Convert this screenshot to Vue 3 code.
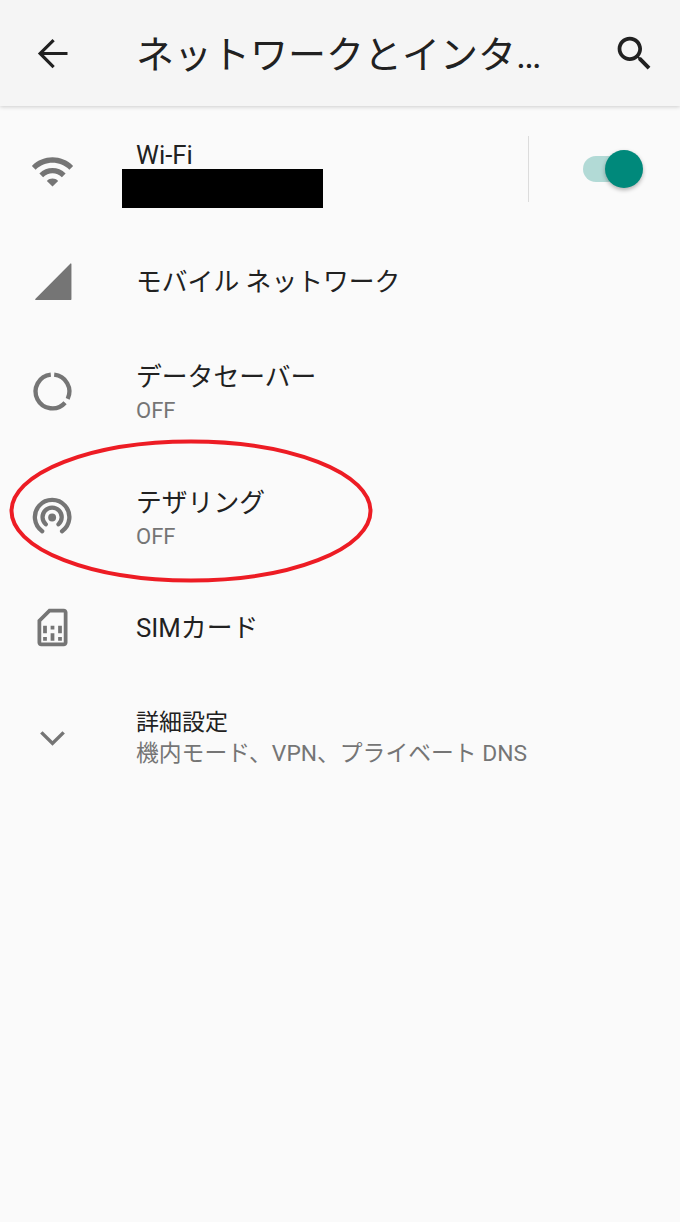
<script setup>
const rows = [
  { id: 'mobile', title: 'モバイル ネットワーク' },
  { id: 'saver', title: 'データセーバー', sub: 'OFF' },
  { id: 'tether', title: 'テザリング', sub: 'OFF' },
  { id: 'sim', title: 'SIMカード' },
  { id: 'more', title: '詳細設定', sub: '機内モード、VPN、プライベート DNS', small: true }
];
</script>

<template>
  <div class="page">
    <header class="appbar">
      <svg class="icon dark" viewBox="0 0 24 24"><path d="M20 11.2H7.4l5.8-5.8L12 4.2 4.2 12l7.8 7.8 1.2-1.2-5.8-5.8H20z" /></svg>
      <h1 class="appbar-title">ネットワークとインターネット</h1>
      <svg class="icon dark" viewBox="0 0 24 24"><path d="M15.5 14h-.79l-.28-.27C15.41 12.59 16 11.11 16 9.5 16 5.91 13.09 3 9.5 3S3 5.91 3 9.5 5.91 16 9.5 16c1.61 0 3.09-.59 4.23-1.57l.27.28v.79l5 4.99L20.49 19l-4.99-5zm-6 0C7.01 14 5 11.99 5 9.5S7.01 5 9.5 5 14 7.01 14 9.5 11.99 14 9.5 14z" /></svg>
    </header>

    <div class="list">
      <div class="row double wifi">
        <svg class="icon" viewBox="0 0 24 24"><path d="M1 9l2 2c4.97-4.97 13.03-4.97 18 0l2-2C16.93 2.93 7.08 2.93 1 9zm8 8l3 3 3-3c-1.65-1.66-4.34-1.66-6 0zm-4-4l2 2c2.76-2.76 7.24-2.76 10 0l2-2C15.14 9.14 8.87 9.14 5 13z" /></svg>
        <div class="text">
          <div class="title wifi-title">Wi-Fi</div>
          <div class="redacted"></div>
        </div>
        <div class="divider"></div>
        <div class="switch">
          <div class="track"></div>
          <div class="thumb"></div>
        </div>
      </div>

      <div v-for="row in rows" :key="row.id" class="row" :class="row.sub ? 'double' : 'single'">
        <svg v-if="row.id === 'mobile'" class="icon" viewBox="0 0 24 24"><path d="M3 21.8h18.7a.4.4 0 0 0 .4-.4V2.6a.3.3 0 0 0-.5-.2L2.8 21.3a.3.3 0 0 0 .2.5z" /></svg>
        <svg v-else-if="row.id === 'saver'" class="icon line" viewBox="0 0 24 24">
          <path d="M12.9 3.05a9 9 0 0 1 7.2 12.85" />
          <path d="M18.7 18a9 9 0 1 1-7.6-14.95" />
        </svg>
        <svg v-else-if="row.id === 'tether'" class="icon line round" viewBox="0 0 24 24">
          <circle class="dot" cx="11.8" cy="12" r="2.1" />
          <path d="M8.4 15.6a5.1 5.1 0 1 1 6.8 0" />
          <path d="M6.5 19.3a9.2 9.2 0 1 1 10.6 0" />
        </svg>
        <svg v-else-if="row.id === 'sim'" class="icon" viewBox="0 0 24 24"><path d="M18 2h-8L4 8v12c0 1.1.9 2 2 2h12c1.1 0 2-.9 2-2V4c0-1.1-.9-2-2-2zm0 2v16H6V8.83L10.83 4H18zM7 17h2v2H7zm8 0h2v2h-2zM7 11h2v4H7zm4 4h2v4h-2zm0-4h2v2h-2zm4 0h2v4h-2z" /></svg>
        <svg v-else class="icon" viewBox="0 0 24 24"><path d="M6.7 8.6 12 13.8l5.3-5.2 1.3 1.3-6.6 6.5-6.6-6.5z" /></svg>

        <div class="text" :class="{ 'text-single': !row.sub }">
          <div class="title" :class="{ small: row.small }">{{ row.title }}</div>
          <div v-if="row.sub" class="sub" :class="{ 'sub-long': row.small }">{{ row.sub }}</div>
        </div>
      </div>
    </div>

    <!-- hand drawn marker round the tethering row -->
    <svg class="marker" width="680" height="160" viewBox="0 0 680 160">
      <ellipse cx="191" cy="81" rx="179.5" ry="69.5" />
    </svg>
  </div>
</template>

<style>
html, body {
  margin: 0;
  background: #fafafa;
}
</style>

<style scoped>
.page {
  position: relative;
  width: 680px;
  height: 1222px;
  overflow: hidden;
  background: #fafafa;
  font-family: Roboto, "Noto Sans CJK JP", sans-serif;
  color: #212121;
}

.appbar {
  display: flex;
  align-items: center;
  height: 106px;
  padding: 0 23px 0 30px;
  box-sizing: border-box;
  background: #f5f5f5;
  box-shadow: 0 1px 4px rgba(0, 0, 0, 0.18);
}

.appbar-title {
  flex: 1;
  min-width: 0;
  margin: -4px 62px 0 61px;
  font-size: 38px;
  font-weight: 400;
  white-space: nowrap;
  overflow: hidden;
  text-overflow: ellipsis;
}

.icon {
  flex: none;
  width: 45px;
  height: 45px;
  fill: #757575;
}

.icon.dark {
  fill: #212121;
}

.icon.line {
  fill: none;
  stroke: #757575;
  stroke-width: 2.3;
}

.icon.round {
  stroke-linecap: round;
}

.icon .dot {
  fill: #757575;
  stroke: none;
}

.list {
  padding-top: 2px;
}

.row {
  display: flex;
  align-items: center;
  padding-left: 30px;
}

.row.single {
  height: 94px;
}

.row.double {
  height: 126px;
}

.text {
  margin-left: 61px;
  margin-top: 4px;
  flex: 1;
  min-width: 0;
}

.text.text-single {
  margin-top: 2px;
}

.title {
  font-size: 25.8px;
  line-height: 34px;
  white-space: nowrap;
}

.title.small {
  font-size: 23px;
  line-height: 30px;
}

.wifi-title {
  margin-top: 3px;
  line-height: 27px;
}

.sub {
  margin-top: 1px;
  font-size: 22px;
  line-height: 32px;
  color: #757575;
  white-space: nowrap;
}

.sub-long {
  margin-top: 0;
  font-size: 22.8px;
}

.redacted {
  width: 201px;
  height: 39px;
  margin-left: -14px;
  background: #000;
}

.divider {
  flex: none;
  width: 1px;
  height: 66px;
  margin-top: -4px;
  background: #dcdcdc;
}

.switch {
  position: relative;
  flex: none;
  width: 60px;
  height: 38px;
  margin: -4px 37px 0 54px;
}

.track {
  position: absolute;
  left: 0;
  top: 6px;
  width: 44px;
  height: 26px;
  border-radius: 13px;
  background: #b2dad6;
}

.thumb {
  position: absolute;
  left: 22px;
  top: 0;
  width: 38px;
  height: 38px;
  border-radius: 50%;
  background: #00897b;
  box-shadow: 0 2px 4px rgba(0, 0, 0, 0.3);
}

.marker {
  position: absolute;
  left: 0;
  top: 430px;
  fill: none;
  stroke: #ed1c24;
  stroke-width: 4;
}
</style>
